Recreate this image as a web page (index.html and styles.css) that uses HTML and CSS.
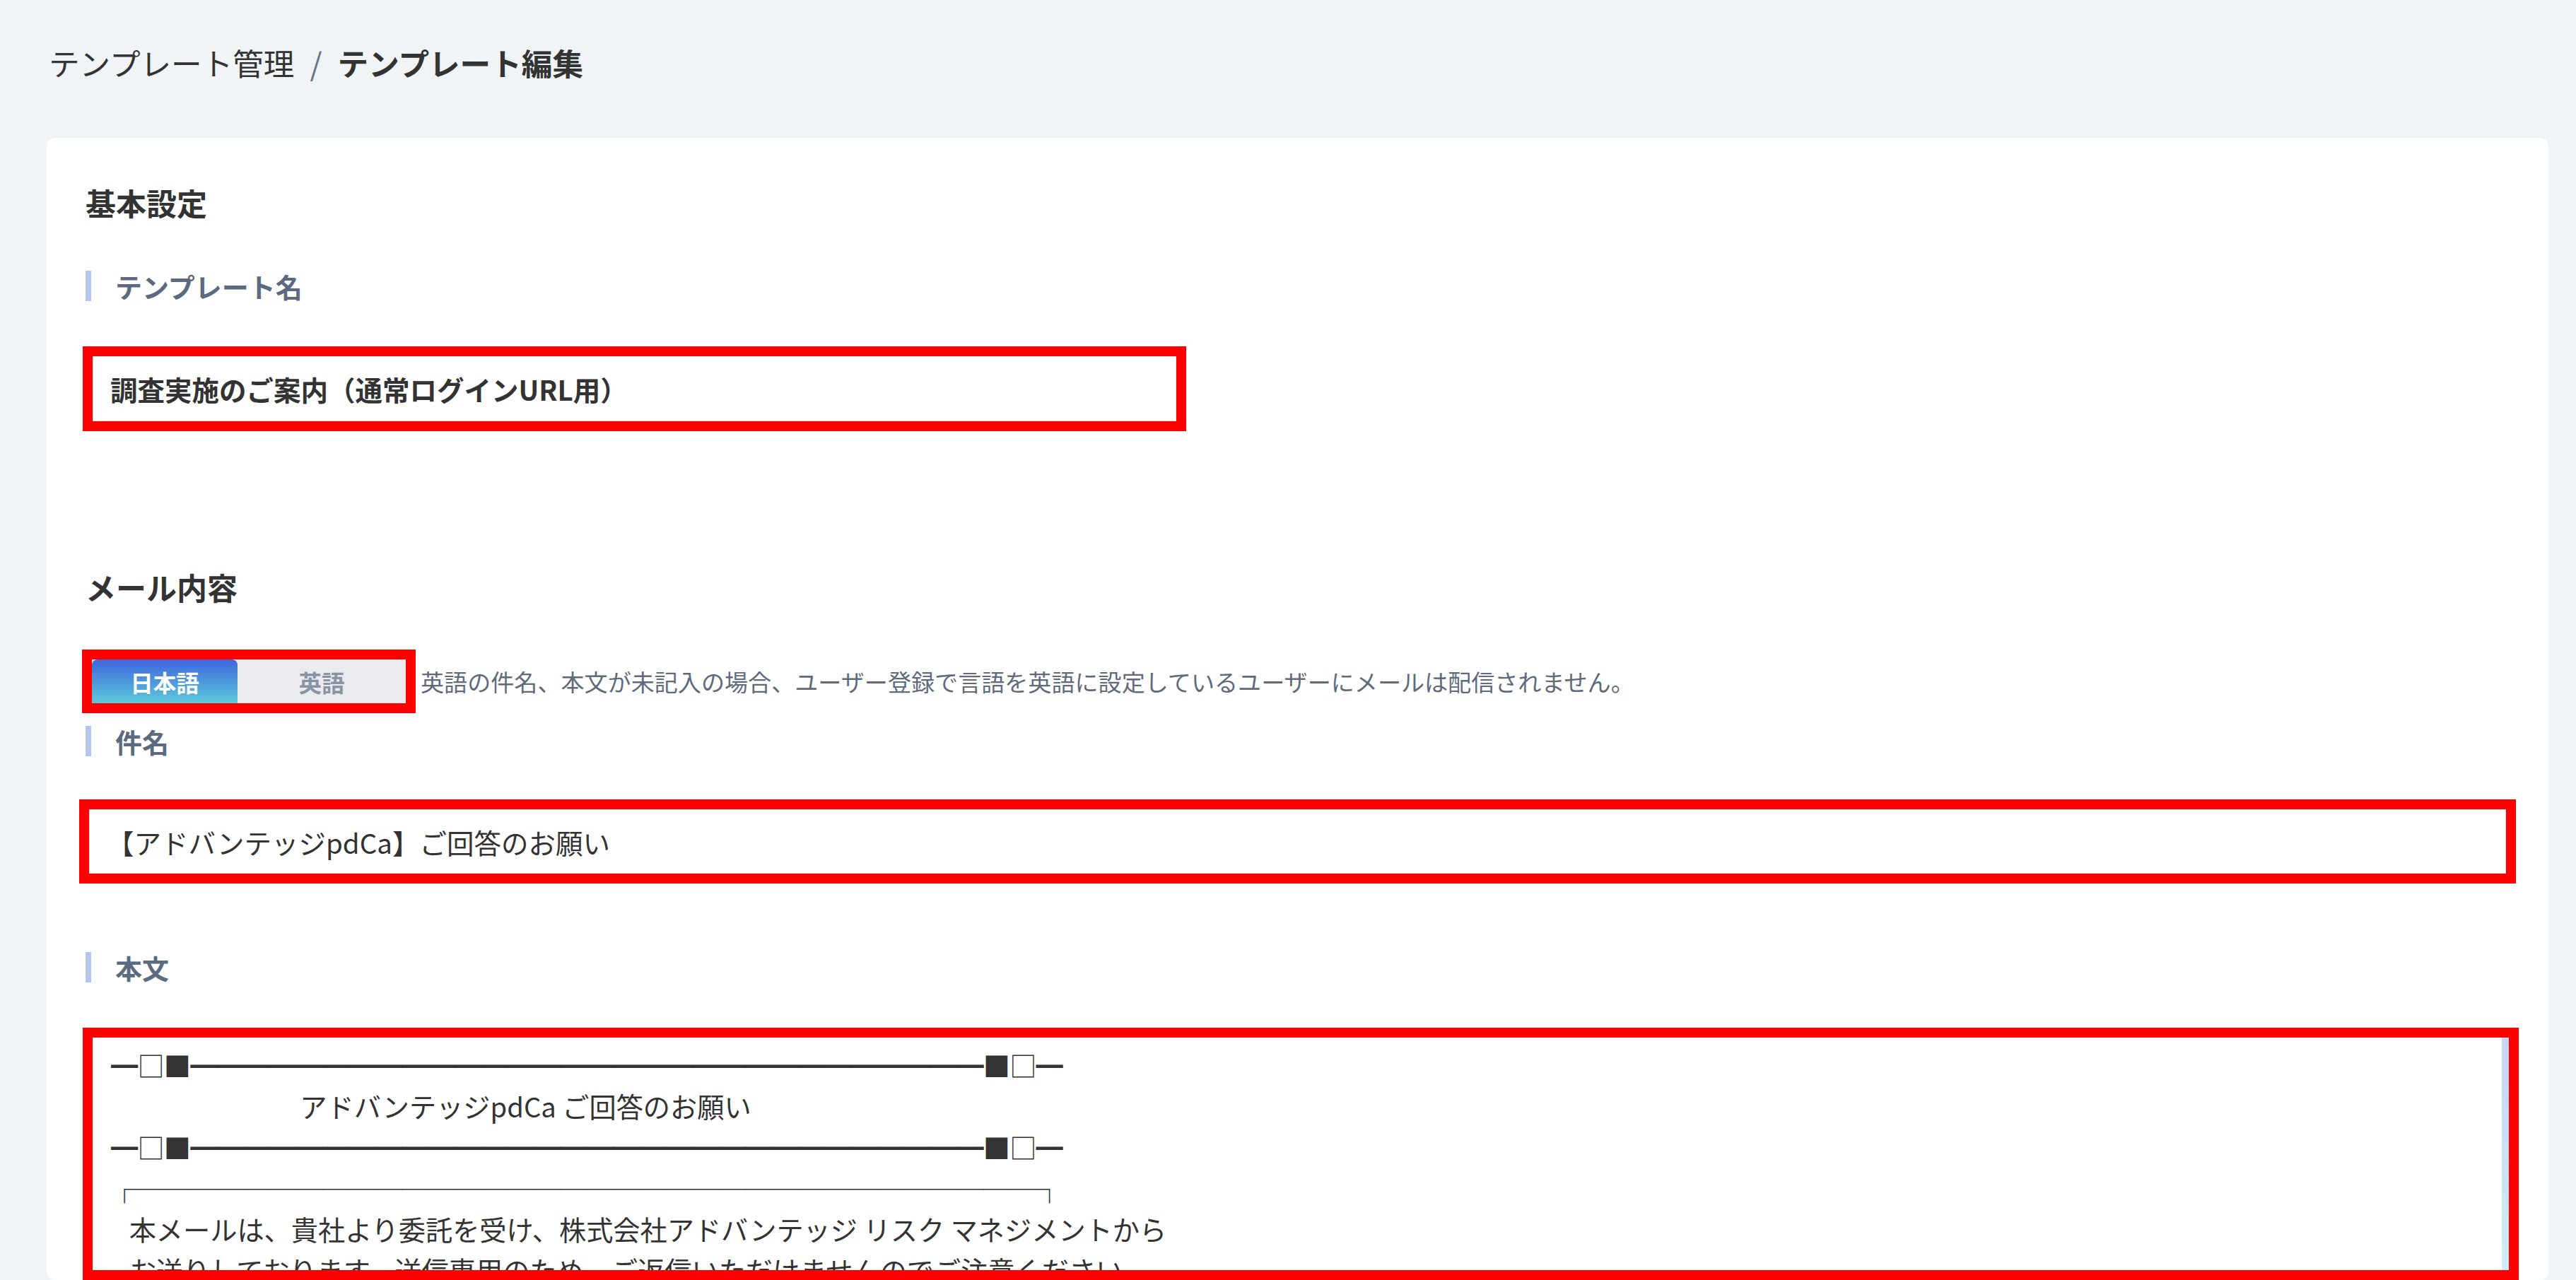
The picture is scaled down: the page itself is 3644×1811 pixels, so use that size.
FILE: index.html
```html
<!DOCTYPE html>
<html lang="ja">
<head>
    <meta charset="UTF-8">
    <meta name="viewport" content="width=device-width, initial-scale=1.0">
    <title>テンプレート編集</title>
    <link rel="stylesheet" href="styles.css">
</head>
<body>
    <div class="page">
        <div class="breadcrumb">
            <span>テンプレート管理</span>
            <span class="sep">/</span>
            <span class="current">テンプレート編集</span>
        </div>

        <div class="card">
            <h2 class="section-title">基本設定</h2>
            <div class="field-label">テンプレート名</div>
            <input class="text-input name-input" type="text" value="調査実施のご案内（通常ログインURL用）">

            <h2 class="section-title mail-title">メール内容</h2>
            <div class="lang-row">
                <div class="lang-toggle">
                    <button class="lang-btn active">日本語</button>
                    <button class="lang-btn">英語</button>
                </div>
                <p class="lang-note">英語の件名、本文が未記入の場合、ユーザー登録で言語を英語に設定しているユーザーにメールは配信されません。</p>
            </div>

            <div class="field-label subject-label">件名</div>
            <input class="text-input subject-input" type="text" value="【アドバンテッジpdCa】ご回答のお願い">

            <div class="field-label body-label">本文</div>
            <div class="body-editor"><span class="rule">━□■━━━━━━━━━━━━━━━━━━━━━━━━━━━━━━■□━</span>
　　　　　　　アドバンテッジpdCa ご回答のお願い
<span class="rule">━□■━━━━━━━━━━━━━━━━━━━━━━━━━━━━━━■□━</span>
<span class="rule">┌──────────────────────────────────┐</span>
   本メールは、貴社より委託を受け、株式会社アドバンテッジ リスク マネジメントから
   お送りしております。送信専用のため、ご返信いただけませんのでご注意ください。</div>
        </div>
    </div>
</body>
</html>
```

FILE: styles.css
```css
* {
    margin: 0;
    padding: 0;
    box-sizing: border-box;
}

body {
    background-color: #f0f4f7;
    font-family: "Noto Sans CJK JP", "Noto Sans", sans-serif;
    color: #333;
}

.page {
    padding: 58px 39px 0 66px;
}

.breadcrumb {
    display: flex;
    align-items: center;
    gap: 22px;
    height: 60px;
    padding-left: 3px;
    font-size: 43.6px;
    line-height: 60px;
}

.breadcrumb .sep {
    color: #667588;
}

.breadcrumb .current {
    font-weight: 700;
}

.card {
    margin-top: 77px;
    background-color: #fff;
    border-radius: 12px;
    padding: 61px 55px 14px;
}

.section-title {
    font-size: 43px;
    line-height: 60px;
    font-weight: 700;
    color: #333;
}

.field-label {
    margin-top: 67px;
    border-left: 8px solid #b4c6f0;
    padding-left: 34px;
    font-size: 38px;
    line-height: 43px;
    font-weight: 700;
    color: #5b6a80;
}

.text-input {
    display: block;
    height: 92px;
    padding: 0 24px;
    border: 1px solid #e2e5eb;
    background-color: #fff;
    font-family: inherit;
    font-size: 38.5px;
    color: #333;
    outline: 14px solid #ff0000;
}

/* template name */
.name-input {
    width: 1533px;
    margin: 78px 0 0 10px;
    font-weight: 700;
}

.mail-title {
    margin-top: 204px;
}

.lang-row {
    display: flex;
    align-items: center;
    gap: 21px;
    margin: 73px 0 0 9px;
}

.lang-toggle {
    display: flex;
    height: 62px;
    background-color: #e9ebee;
    outline: 14px solid #ff0000;
}

.lang-btn {
    border: none;
    background: none;
    font-family: inherit;
    font-size: 32.6px;
    font-weight: 700;
    color: #8a93a3;
    width: 238px;
    cursor: pointer;
}

.lang-btn.active {
    width: 206px;
    color: #fff;
    background: linear-gradient(#3f66dd, #5cc9da);
    border-radius: 8px 8px 0 0;
}

.lang-note {
    font-size: 33.1px;
    color: #5f6b7d;
}

.subject-label {
    margin-top: 32px;
}

.subject-input {
    width: calc(100% - 10px);
    height: 91px;
    margin: 75px 0 0 5px;
}

.body-label {
    margin-top: 111px;
}

.body-editor {
    height: 329px;
    margin: 78px 1px 0 10px;
    padding: 10px 0 0 26px;
    overflow: hidden;
    white-space: pre;
    font-size: 38.2px;
    line-height: 58px;
    color: #333;
    background: linear-gradient(#c8d4f4, #cdeef3) right top / 10px 100% no-repeat, #fff;
    outline: 14px solid #ff0000;
}

.body-editor .rule {
    letter-spacing: -0.8px;
}
```
